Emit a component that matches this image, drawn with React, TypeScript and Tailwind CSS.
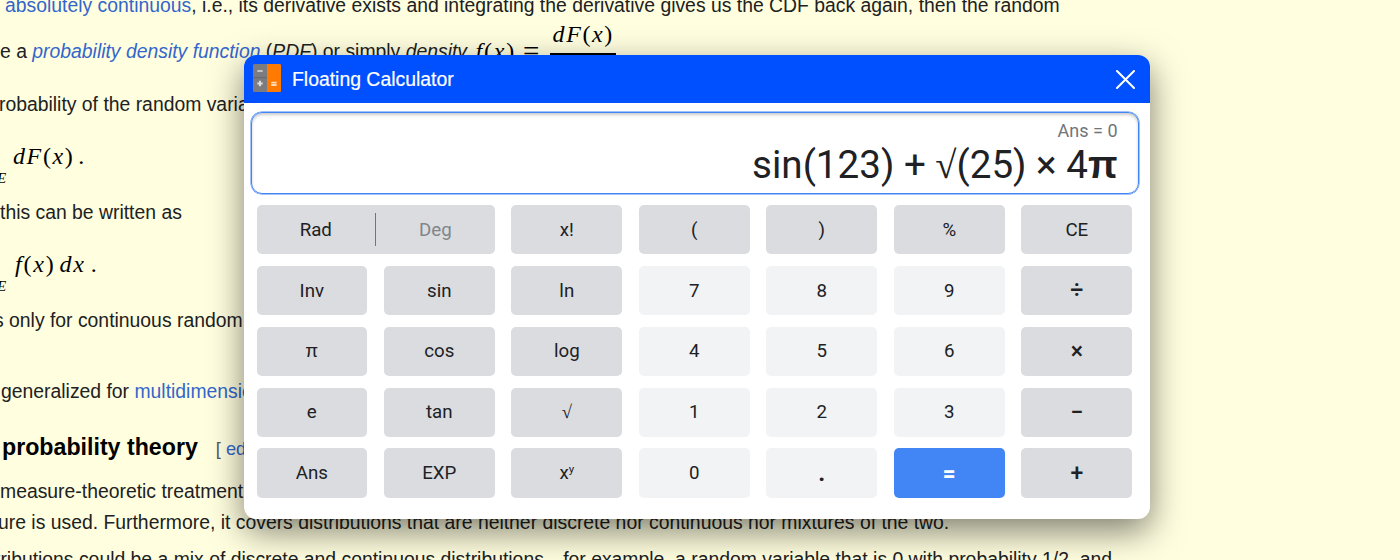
import React from "react";

type Key = { label: React.ReactNode; kind?: "fn" | "num" | "eq"; cls?: string };

const keys: Key[] = [
  { label: "x!" },
  { label: "(" },
  { label: ")" },
  { label: "%" },
  { label: "CE" },
  { label: "Inv" },
  { label: "sin" },
  { label: "ln" },
  { label: "7", kind: "num" },
  { label: "8", kind: "num" },
  { label: "9", kind: "num" },
  { label: "÷", cls: "pt-[2px] text-[23px] font-medium" },
  { label: "π", cls: "font-['Liberation_Sans']" },
  { label: "cos" },
  { label: "log" },
  { label: "4", kind: "num" },
  { label: "5", kind: "num" },
  { label: "6", kind: "num" },
  { label: "×", cls: "pt-[2px] text-[23px] font-medium" },
  { label: "e" },
  { label: "tan" },
  { label: "√", cls: "font-['Liberation_Serif']" },
  { label: "1", kind: "num" },
  { label: "2", kind: "num" },
  { label: "3", kind: "num" },
  { label: "−", cls: "pt-[2px] text-[23px] font-medium" },
  { label: "Ans" },
  { label: "EXP" },
  {
    label: (
      <span>
        x<sup className="top-[-6px] text-[11.5px]">y</sup>
      </span>
    ),
  },
  { label: "0", kind: "num" },
  { label: ".", kind: "num", cls: "text-[24px] font-bold" },
  { label: "=", kind: "eq", cls: "text-[22px] font-black" },
  { label: "+", cls: "pt-[2px] text-[23px] font-medium" },
];

const kindClass = {
  fn: "bg-[#dadce0] text-[#202124]",
  num: "bg-[#f1f3f4] text-[#202124]",
  eq: "bg-[#4285f4] text-white",
};

function CalcKey({ label, kind = "fn", cls = "" }: Key) {
  return (
    <button className={`flex items-center justify-center rounded-[5px] ${kindClass[kind]} ${cls}`}>
      {label}
    </button>
  );
}

function Line({ h, children, cls = "" }: { h: string; children: React.ReactNode; cls?: string }) {
  return <div className={`shrink-0 whitespace-pre leading-6 ${h} ${cls}`}>{children}</div>;
}

const math = "font-['Liberation_Serif'] text-black";

function Article() {
  return (
    <div className="-mt-[7px] flex flex-col font-['Liberation_Sans',sans-serif] text-[19.36px] text-[#202122]">
      <Line h="h-[46px]" cls="pl-[5px]">
        <span className="text-[#3366cc]">absolutely continuous</span>, i.e., its derivative exists and
        {" integrating the derivative gives us the CDF back again, then the random"}
      </Line>
      <Line h="h-[53px]" cls="flex">
        <span>e a </span>
        <i className="text-[#3366cc]">probability density function</i>
        <span>
          {" ("}
          <i>PDF</i>
          {") or simply "}
          <i>density</i>{" "}
        </span>
        <span className={`${math} ml-[3px] text-[24px] tracking-[1.8px]`}>
          <i>f</i>(<i>x</i>)
        </span>
        <span className={`${math} ml-[7px] text-[29px]`}>=</span>
        <span className={`${math} -mt-[17px] ml-[11px] h-[33px] w-[66px] border-b-2 border-black text-center text-[24px] tracking-[1.6px]`}>
          <i>dF</i>(<i>x</i>)
        </span>
      </Line>
      <Line h="h-[52px]" cls="-ml-[1px]">robability of the random variable</Line>
      <Line h="h-[56px]" cls="flex">
        <i className={`${math} mt-[22px] -ml-[3px] w-4 text-[15px]`}>E</i>
        <span className={`${math} text-[24px] tracking-[1.6px]`}>
          <i>dF</i>(<i>x</i>)<span className="ml-[4px]">.</span>
        </span>
      </Line>
      <Line h="h-[52px]">this can be written as</Line>
      <Line h="h-[56px]" cls="flex">
        <i className={`${math} mt-[22px] -ml-[3px] w-[18px] text-[15px]`}>E</i>
        <span className={`${math} text-[24px] tracking-[1.8px]`}>
          <i>f</i>(<i>x</i>)<i className="ml-[4px]">dx</i><span className="ml-[5px]">.</span>
        </span>
      </Line>
      <Line h="h-[71px]" cls="-ml-[6px]">s only for continuous random variables.</Line>
      <Line h="h-[56px]" cls="pl-[1px]">
        generalized for <span className="text-[#3366cc]">multidimensional</span>
      </Line>
      <Line h="h-[44px]" cls="flex pl-[2px]">
        <b className="text-[23.2px] text-black">probability theory</b>
        <span className="ml-[18px] mt-[2px] text-[18.2px] text-[#54595d]">
          [ <span className="text-[#3366cc]">edit</span> ]
        </span>
      </Line>
      <Line h="h-[31px]">measure-theoretic treatment of probability</Line>
      <Line h="h-[37px]" cls="-ml-[2px]">
        ure is used. Furthermore, it covers distributions that are neither discrete nor continuous nor mixtures of the two.
      </Line>
      <Line h="h-[31px]" cls="-ml-[5px]">
        tributions could be a mix of discrete and continuous distributions—for example, a random variable that is 0 with probability 1/2, and
      </Line>
    </div>
  );
}

function LogoIcon() {
  return (
    <svg width="28" height="28" viewBox="0 0 28 28">
      <rect width="28" height="28" rx="1.5" fill="#7c7c80" />
      <path d="M14 0h12.5A1.5 1.5 0 0 1 28 1.5v25a1.5 1.5 0 0 1-1.5 1.5H14z" fill="#ff7a00" />
      <path d="M0 13.7h14" stroke="#68686c" strokeWidth="1" />
      <path d="M4.3 7h5.4" stroke="#c4c4c6" strokeWidth="2" />
      <path d="M4.3 19.5h5.4M7 16.8v5.4" stroke="#dcdcde" strokeWidth="2" />
      <path d="M18.2 18.6h5.4M18.2 21h5.4" stroke="#ffd9b0" strokeWidth="1.9" />
    </svg>
  );
}

export default function App() {
  return (
    <div className="relative h-[560px] w-[1400px] overflow-hidden bg-[#fffedf]">
      <Article />
      <section className="absolute left-[243.5px] top-[55px] flex h-[463.5px] w-[906px] flex-col overflow-hidden rounded-[12px] bg-white font-['Roboto',sans-serif] shadow-[0_12px_34px_rgba(0,0,0,0.5)]">
        <header className="flex h-12 shrink-0 items-center bg-[#0050ff] pl-[9.5px] pr-[14.5px] text-white">
          <div className="-mt-[2px]">
            <LogoIcon />
          </div>
          <h1 className="ml-[11px] mt-[1px] flex-1 font-['Liberation_Sans',sans-serif] text-[19.4px] [-webkit-text-stroke:0.2px_white]">
            Floating Calculator
          </h1>
          <svg width="19" height="19" viewBox="0 0 19 19" stroke="white" strokeWidth="2" strokeLinecap="round">
            <path d="M1 1l17 17M18 1L1 18" />
          </svg>
        </header>
        <div className="ml-[7px] mr-[11px] mt-[9.4px] flex h-[82.1px] shrink-0 flex-col items-end rounded-[11px] border border-[#4285f4] pr-[20px] shadow-[0_0_0_0.5px_#4285f4,inset_0_2px_3px_rgba(0,0,0,0.2)]">
          <div className="mt-[7px] text-[18px] leading-[22px] text-[#70757a]">Ans = 0</div>
          <div className="text-[38.6px] leading-[46px] text-[#202124]">
            sin(123) + <span className="font-['Liberation_Serif']">√</span>(25) × 4
            <b className="font-['Liberation_Sans']">π</b>
          </div>
        </div>
        <div className="ml-[13px] mt-[10.5px] grid h-[293px] w-[875.6px] grid-cols-7 grid-rows-5 gap-x-[16.9px] gap-y-[11.4px] text-[18.7px]">
          <div className="col-span-2 flex items-center rounded-[5px] bg-[#dadce0] text-[#202124]">
            <span className="flex-1 text-center">Rad</span>
            <span className="h-[33px] w-px bg-[#70757a]" />
            <span className="flex-1 text-center text-[#80868b]">Deg</span>
          </div>
          {keys.map((k, i) => (
            <CalcKey key={i} {...k} />
          ))}
        </div>
      </section>
    </div>
  );
}
